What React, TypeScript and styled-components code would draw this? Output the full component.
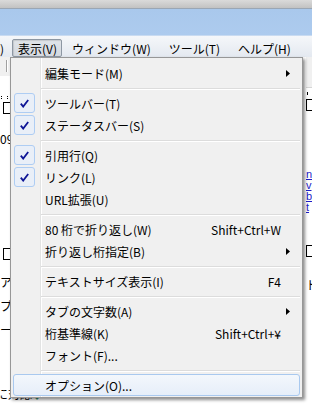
import styled, { createGlobalStyle } from 'styled-components'

type MenuEntry =
  | { sep: true }
  | { sep?: false; label: string; checked?: boolean; shortcut?: string; sub?: boolean; hot?: boolean }

const MENU_BAR = [
  { label: ')', cut: true },
  { label: '表示(V)', open: true },
  { label: 'ウィンドウ(W)' },
  { label: 'ツール(T)' },
  { label: 'ヘルプ(H)' },
]

const VIEW_MENU: MenuEntry[] = [
  { label: '編集モード(M)', sub: true },
  { sep: true },
  { label: 'ツールバー(T)', checked: true },
  { label: 'ステータスバー(S)', checked: true },
  { sep: true },
  { label: '引用行(Q)', checked: true },
  { label: 'リンク(L)', checked: true },
  { label: 'URL拡張(U)' },
  { sep: true },
  { label: '80 桁で折り返し(W)', shortcut: 'Shift+Ctrl+W' },
  { label: '折り返し桁指定(B)', sub: true },
  { sep: true },
  { label: 'テキストサイズ表示(I)', shortcut: 'F4' },
  { sep: true },
  { label: 'タブの文字数(A)', sub: true },
  { label: '桁基準線(K)', shortcut: 'Shift+Ctrl+¥' },
  { label: 'フォント(F)...' },
  { sep: true },
  { label: 'オプション(O)...', hot: true },
]

const LINKS = ['n', 'v', 'b', 't']

const GlobalStyle = createGlobalStyle`
  html, body {
    margin: 0;
    padding: 0;
  }
  body {
    background: #fff;
    font-family: "Noto Sans CJK JP", "Liberation Sans", sans-serif;
    overflow: hidden;
  }
`

const CheckIcon = () => (
  <svg width="9" height="9" viewBox="0 0 9 9">
    <polyline points="0.8,4.6 3.2,7.6 8.2,1" fill="none" stroke="#0e1596" strokeWidth="1.8" />
  </svg>
)

const SubArrow = () => (
  <svg width="4" height="7" viewBox="0 0 4 7">
    <polygon points="0,0 4,3.5 0,7" fill="#000" />
  </svg>
)

const App = () => {
  return (
    <Window>
      <GlobalStyle />
      <TitleStrip />
      <GlassBand />
      <MenuBar>
        {MENU_BAR.map((m) => (
          <BarItem key={m.label} $open={!!m.open} $cut={!!m.cut}>
            {m.label}
          </BarItem>
        ))}
      </MenuBar>

      <Body>
        <LeftStrip>
          <StripToolbar $h={18}>
            <ToolSep />
          </StripToolbar>
          <DotRule $top={20} />
          <FrameBox $top={3} $left={3} />
          <Fragment $top={18}>09</Fragment>
          <FrameBox $top={102} $left={3} />
          <Fragment $top={15}>ア</Fragment>
          <Fragment $top={10}>プ,</Fragment>
          <Fragment $top={10}>ー</Fragment>
          <Fragment $top={50} $wide>
            に対応<DownMark>↓</DownMark>
          </Fragment>
        </LeftStrip>
        <Middle />
        <RightStrip>
          <StripToolbar $h={30} $line />
          <Tick />
          <FrameBox $top={4} $left={0} />
          {LINKS.map((l, i) => (
            <LinkChar key={l} $top={i === 0 ? 58 : 0}>
              {l}
            </LinkChar>
          ))}
          <FrameBox $top={32} $left={0} />
          <Fragment $top={21}>ド</Fragment>
        </RightStrip>
      </Body>

      <DropMenu>
        {VIEW_MENU.map((e, i) =>
          e.sep ? (
            <Separator key={i} />
          ) : (
            <ItemRow key={i} $hot={!!e.hot}>
              <CheckSlot>
                {e.checked && (
                  <CheckFrame>
                    <CheckIcon />
                  </CheckFrame>
                )}
              </CheckSlot>
              <ItemLabel>{e.label}</ItemLabel>
              {e.shortcut && <Shortcut>{e.shortcut}</Shortcut>}
              <ArrowSlot>{e.sub && <SubArrow />}</ArrowSlot>
            </ItemRow>
          ),
        )}
      </DropMenu>
    </Window>
  )
}

export default App

const Window = styled.div`
  position: relative;
  width: 312px;
  height: 407px;
  overflow: hidden;
  display: flex;
  flex-direction: column;
  background: #fff;
`

const TitleStrip = styled.div`
  height: 8px;
  background: linear-gradient(#dadada, #c2c2c2);
  border-bottom: 1px solid #9aa6b4;
`

const GlassBand = styled.div`
  height: 26px;
  background: linear-gradient(#a9c8ec, #adcbee);
  border-bottom: 1px solid #c9dbf1;
`

const MenuBar = styled.div`
  height: 21px;
  display: flex;
  align-items: flex-end;
  background: linear-gradient(#f5f7fa, #e4e9f0);
  font-size: 12px;
  color: #000;
  white-space: nowrap;
`

const BarItem = styled.div<{ $open: boolean; $cut: boolean }>`
  height: 18px;
  box-sizing: border-box;
  display: flex;
  align-items: center;
  padding: ${(p) => (p.$cut ? '0 7px 0 0' : p.$open ? '0 4px 0 5px' : '0 7px')};
  margin-left: ${(p) => (p.$cut ? '-1px' : p.$open ? '0' : '2px')};
  border: 1px solid ${(p) => (p.$open ? '#8d97a3' : 'transparent')};
  border-radius: 2px;
  background: ${(p) => (p.$open ? 'linear-gradient(#e0e4e9, #d4d9e0)' : 'transparent')};
  box-shadow: ${(p) => (p.$open ? 'inset 1px 1px 1px rgba(0,0,0,0.12)' : 'none')};
`

const Body = styled.div`
  flex: 1;
  display: flex;
  font-size: 12px;
  color: #000;
`

const LeftStrip = styled.div`
  width: 10px;
  display: flex;
  flex-direction: column;
`

const Middle = styled.div`
  flex: 1;
`

const RightStrip = styled.div`
  width: 6px;
  display: flex;
  flex-direction: column;
  overflow: hidden;
`

const StripToolbar = styled.div<{ $h: number; $line?: boolean }>`
  height: ${(p) => p.$h}px;
  flex-shrink: 0;
  background: #f0f0f0;
  border-bottom: 1px solid ${(p) => (p.$line ? '#d5d5d5' : '#f0f0f0')};
  display: flex;
  align-items: center;
`

const ToolSep = styled.div`
  width: 1px;
  height: 12px;
  margin-left: 6px;
  background: #a0a0a0;
  box-shadow: 1px 0 0 #fff;
`

const DotRule = styled.div<{ $top: number }>`
  margin-top: ${(p) => p.$top}px;
  height: 3px;
  border-left: 1px dotted #000;
  border-right: 1px dotted #000;
  width: 5px;
  margin-left: 1px;
`

const FrameBox = styled.div<{ $top: number; $left: number }>`
  margin-top: ${(p) => p.$top}px;
  margin-left: ${(p) => p.$left}px;
  width: 11px;
  height: 12px;
  flex-shrink: 0;
  border: 1px solid #000;
  box-sizing: border-box;
`

const Fragment = styled.div<{ $top: number; $wide?: boolean }>`
  margin-top: ${(p) => p.$top}px;
  height: 14px;
  line-height: 14px;
  flex-shrink: 0;
  white-space: nowrap;
  font-size: 12px;
  text-indent: ${(p) => (p.$wide ? '-4px' : '0')};
`

const DownMark = styled.span`
  color: #2a8a6a;
  font-size: 10px;
`

const Tick = styled.div`
  margin-top: 4px;
  margin-left: 1px;
  width: 1px;
  height: 3px;
  background: #000;
`

const LinkChar = styled.div<{ $top: number }>`
  margin-top: ${(p) => p.$top}px;
  height: 11px;
  line-height: 11px;
  font-size: 11px;
  font-family: "Liberation Sans", sans-serif;
  color: #1c1cc8;
  text-decoration: underline;
  flex-shrink: 0;
`

const DropMenu = styled.div`
  position: absolute;
  left: 10px;
  top: 57px;
  width: 293px;
  box-sizing: border-box;
  padding: 4px 0 1px;
  border: 1px solid #979797;
  background: linear-gradient(
    to right,
    #f0f0f0 29px,
    #e2e3e3 29px,
    #e2e3e3 30px,
    #ffffff 30px,
    #ffffff 31px,
    #f0f0f0 31px
  );
  box-shadow: 2px 2px 3px rgba(0, 0, 0, 0.45);
  font-size: 12px;
  color: #000;
  white-space: nowrap;
`

const ItemRow = styled.div<{ $hot: boolean }>`
  height: 22px;
  margin: 0 2px;
  box-sizing: border-box;
  display: flex;
  align-items: center;
  border: 1px solid ${(p) => (p.$hot ? '#a9c9ef' : 'transparent')};
  border-radius: 3px;
  background: ${(p) => (p.$hot ? 'linear-gradient(#f3f7fc, #e6eef9)' : 'transparent')};
`

const CheckSlot = styled.div`
  width: 21px;
  height: 20px;
  display: flex;
`

const CheckFrame = styled.div`
  width: 21px;
  height: 20px;
  box-sizing: border-box;
  border: 1px solid #aecdf3;
  border-radius: 3px;
  background: #e9eff8;
  display: flex;
  align-items: center;
  justify-content: center;
`

const ItemLabel = styled.span`
  flex: 1;
  padding-left: 10px;
`

const Shortcut = styled.span`
  font-size: 12px;
`

const ArrowSlot = styled.div`
  width: 18px;
  padding-left: 5px;
  box-sizing: border-box;
  display: flex;
  align-items: center;
`

const Separator = styled.div`
  height: 8px;
  margin: 0 2px 0 30px;
  background: linear-gradient(
    #f0f0f000 4px,
    #dcdcdc 4px,
    #dcdcdc 5px,
    #ffffff 5px,
    #ffffff 6px,
    #f0f0f000 6px
  );
`
